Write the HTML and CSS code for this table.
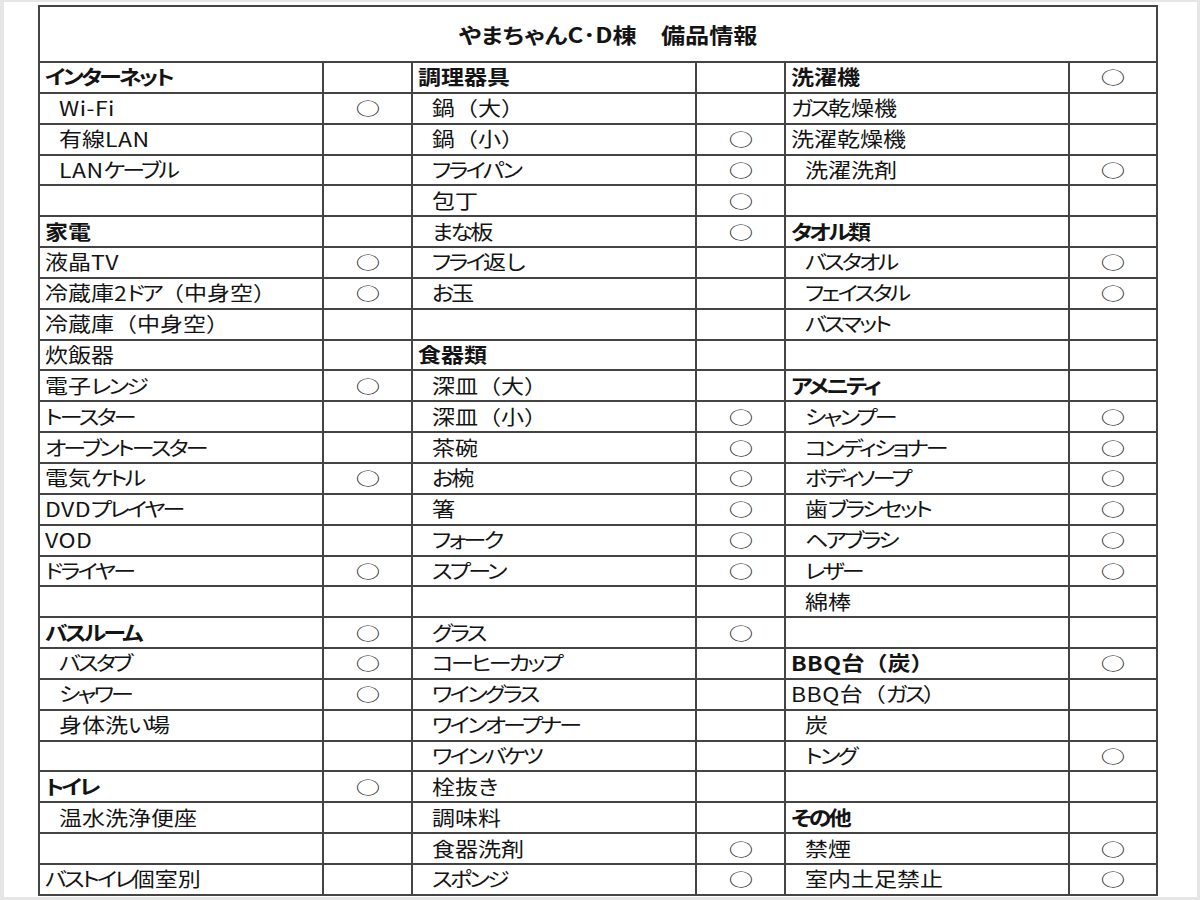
FILE: index.html
```html
<!DOCTYPE html>
<html lang="ja">
<head>
<meta charset="utf-8">
<title>やまちゃんC･D棟 備品情報</title>
<link rel="stylesheet" href="styles.css">
</head>
<body>
<div class="sheet">
<table class="list">
<colgroup>
<col class="c-name1"><col class="c-mark"><col class="c-name"><col class="c-mark"><col class="c-name"><col class="c-mark-last">
</colgroup>
<thead>
<tr class="title-row"><th colspan="6"><span class="t">やまちゃんC･D棟　備品情報</span></th></tr>
</thead>
<tbody>
<tr><td class="hd"><span class="t"><span class="k">インターネット</span></span></td><td class="mk"></td><td class="hd"><span class="t">調理器具</span></td><td class="mk"></td><td class="hd"><span class="t">洗濯機</span></td><td class="mk"><span class="o">○</span></td></tr>
<tr><td class="in"><span class="t"><span class="l">Wi-Fi</span></span></td><td class="mk"><span class="o">○</span></td><td class="in"><span class="t">鍋<span class="p">（</span>大<span class="p">）</span></span></td><td class="mk"></td><td><span class="t"><span class="k">ガス</span>乾燥機</span></td><td class="mk"></td></tr>
<tr><td class="in"><span class="t">有線<span class="l">LAN</span></span></td><td class="mk"></td><td class="in"><span class="t">鍋<span class="p">（</span>小<span class="p">）</span></span></td><td class="mk"><span class="o">○</span></td><td><span class="t">洗濯乾燥機</span></td><td class="mk"></td></tr>
<tr><td class="in"><span class="t"><span class="l">LAN</span><span class="k">ケーブル</span></span></td><td class="mk"></td><td class="in"><span class="t"><span class="k">フライパン</span></span></td><td class="mk"><span class="o">○</span></td><td class="in"><span class="t">洗濯洗剤</span></td><td class="mk"><span class="o">○</span></td></tr>
<tr><td></td><td class="mk"></td><td class="in"><span class="t">包丁</span></td><td class="mk"><span class="o">○</span></td><td></td><td class="mk"></td></tr>
<tr><td class="hd"><span class="t">家電</span></td><td class="mk"></td><td class="in"><span class="t"><span class="k">まな</span>板</span></td><td class="mk"><span class="o">○</span></td><td class="hd"><span class="t"><span class="k">タオル</span>類</span></td><td class="mk"></td></tr>
<tr><td><span class="t">液晶<span class="l">TV</span></span></td><td class="mk"><span class="o">○</span></td><td class="in"><span class="t"><span class="k">フライ</span>返<span class="k">し</span></span></td><td class="mk"></td><td class="in"><span class="t"><span class="k">バスタオル</span></span></td><td class="mk"><span class="o">○</span></td></tr>
<tr><td><span class="t">冷蔵庫2<span class="k">ドア</span><span class="p">（</span>中身空<span class="p">）</span></span></td><td class="mk"><span class="o">○</span></td><td class="in"><span class="t"><span class="k">お</span>玉</span></td><td class="mk"></td><td class="in"><span class="t"><span class="k">フェイスタル</span></span></td><td class="mk"><span class="o">○</span></td></tr>
<tr><td><span class="t">冷蔵庫<span class="p">（</span>中身空<span class="p">）</span></span></td><td class="mk"></td><td></td><td class="mk"></td><td class="in"><span class="t"><span class="k">バスマット</span></span></td><td class="mk"></td></tr>
<tr><td><span class="t">炊飯器</span></td><td class="mk"></td><td class="hd"><span class="t">食器類</span></td><td class="mk"></td><td></td><td class="mk"></td></tr>
<tr><td><span class="t">電子<span class="k">レンジ</span></span></td><td class="mk"><span class="o">○</span></td><td class="in"><span class="t">深皿<span class="p">（</span>大<span class="p">）</span></span></td><td class="mk"></td><td class="hd"><span class="t"><span class="k">アメニティ</span></span></td><td class="mk"></td></tr>
<tr><td><span class="t"><span class="k">トースター</span></span></td><td class="mk"></td><td class="in"><span class="t">深皿<span class="p">（</span>小<span class="p">）</span></span></td><td class="mk"><span class="o">○</span></td><td class="in"><span class="t"><span class="k">シャンプー</span></span></td><td class="mk"><span class="o">○</span></td></tr>
<tr><td><span class="t"><span class="k">オーブントースター</span></span></td><td class="mk"></td><td class="in"><span class="t">茶碗</span></td><td class="mk"><span class="o">○</span></td><td class="in"><span class="t"><span class="k">コンディショナー</span></span></td><td class="mk"><span class="o">○</span></td></tr>
<tr><td><span class="t">電気<span class="k">ケトル</span></span></td><td class="mk"><span class="o">○</span></td><td class="in"><span class="t"><span class="k">お</span>椀</span></td><td class="mk"><span class="o">○</span></td><td class="in"><span class="t"><span class="k">ボディソープ</span></span></td><td class="mk"><span class="o">○</span></td></tr>
<tr><td><span class="t"><span class="l">DVD</span><span class="k">プレイヤー</span></span></td><td class="mk"></td><td class="in"><span class="t">箸</span></td><td class="mk"><span class="o">○</span></td><td class="in"><span class="t">歯<span class="k">ブラシセット</span></span></td><td class="mk"><span class="o">○</span></td></tr>
<tr><td><span class="t"><span class="l">VOD</span></span></td><td class="mk"></td><td class="in"><span class="t"><span class="k">フォーク</span></span></td><td class="mk"><span class="o">○</span></td><td class="in"><span class="t"><span class="k">ヘアブラシ</span></span></td><td class="mk"><span class="o">○</span></td></tr>
<tr><td><span class="t"><span class="k">ドライヤー</span></span></td><td class="mk"><span class="o">○</span></td><td class="in"><span class="t"><span class="k">スプーン</span></span></td><td class="mk"><span class="o">○</span></td><td class="in"><span class="t"><span class="k">レザー</span></span></td><td class="mk"><span class="o">○</span></td></tr>
<tr><td></td><td class="mk"></td><td></td><td class="mk"></td><td class="in"><span class="t">綿棒</span></td><td class="mk"></td></tr>
<tr><td class="hd"><span class="t"><span class="k">バスルーム</span></span></td><td class="mk"><span class="o">○</span></td><td class="in"><span class="t"><span class="k">グラス</span></span></td><td class="mk"><span class="o">○</span></td><td></td><td class="mk"></td></tr>
<tr><td class="in"><span class="t"><span class="k">バスタブ</span></span></td><td class="mk"><span class="o">○</span></td><td class="in"><span class="t"><span class="k">コーヒーカップ</span></span></td><td class="mk"></td><td class="hd"><span class="t"><span class="l">BBQ</span>台<span class="p">（</span>炭<span class="p">）</span></span></td><td class="mk"><span class="o">○</span></td></tr>
<tr><td class="in"><span class="t"><span class="k">シャワー</span></span></td><td class="mk"><span class="o">○</span></td><td class="in"><span class="t"><span class="k">ワイングラス</span></span></td><td class="mk"></td><td><span class="t"><span class="l">BBQ</span>台<span class="p">（</span><span class="k">ガス</span><span class="p">）</span></span></td><td class="mk"></td></tr>
<tr><td class="in"><span class="t">身体洗<span class="k">い</span>場</span></td><td class="mk"></td><td class="in"><span class="t"><span class="k">ワインオープナー</span></span></td><td class="mk"></td><td class="in"><span class="t">炭</span></td><td class="mk"></td></tr>
<tr><td></td><td class="mk"></td><td class="in"><span class="t"><span class="k">ワインバケツ</span></span></td><td class="mk"></td><td class="in"><span class="t"><span class="k">トング</span></span></td><td class="mk"><span class="o">○</span></td></tr>
<tr><td class="hd"><span class="t"><span class="k">トイレ</span></span></td><td class="mk"><span class="o">○</span></td><td class="in"><span class="t">栓抜<span class="k">き</span></span></td><td class="mk"></td><td></td><td class="mk"></td></tr>
<tr><td class="in"><span class="t">温水洗浄便座</span></td><td class="mk"></td><td class="in"><span class="t">調味料</span></td><td class="mk"></td><td class="hd"><span class="t"><span class="k">その</span>他</span></td><td class="mk"></td></tr>
<tr><td></td><td class="mk"></td><td class="in"><span class="t">食器洗剤</span></td><td class="mk"><span class="o">○</span></td><td class="in"><span class="t">禁煙</span></td><td class="mk"><span class="o">○</span></td></tr>
<tr><td><span class="t"><span class="k">バストイレ</span>個室別</span></td><td class="mk"></td><td class="in"><span class="t"><span class="k">スポンジ</span></span></td><td class="mk"><span class="o">○</span></td><td class="in"><span class="t">室内土足禁止</span></td><td class="mk"><span class="o">○</span></td></tr>
</tbody>
</table>
</div>
</body>
</html>
```
FILE: styles.css
```css
html, body {
  margin: 0;
  padding: 0;
}
body {
  background: #e6e6e6;
  padding: 2px 3px 3px 4px;
  font-family: "Noto Sans CJK JP", "Noto Sans", sans-serif;
  color: #141414;
}
.sheet {
  background: #ffffff;
  height: 895px;
  padding: 3px 0 0 34px;
  box-sizing: border-box;
}
.list {
  border-collapse: collapse;
  table-layout: fixed;
  width: 1118px;
  border: 2px solid #3c3c3c;
}
.c-name1 { width: 284px; }
.c-name { width: 284px; }
.c-mark { width: 89px; }
.c-mark-last { width: 88px; }
.list th,
.list td {
  border: 2px solid #444;
  padding: 0 0 0 5px;
  font-size: 20px;
  font-weight: 400;
  line-height: 1;
  white-space: nowrap;
  overflow: hidden;
  text-align: left;
  vertical-align: middle;
}
.title-row th {
  height: 54px;
  text-align: center;
  font-weight: 700;
  font-size: 21px;
  padding: 0 0 0 20px;
}
.title-row th .t {
  transform-origin: center center;
}
.list tbody tr {
  height: 30.85px;
}
.list td.in {
  padding-left: 19px;
}
.list td.hd {
  font-weight: 700;
}
.list td.mk {
  text-align: center;
  padding: 0;
}
.t {
  display: inline-block;
  transform: scaleX(1.15);
  transform-origin: left center;
  font-feature-settings: "palt" 1;
}
.k {
  letter-spacing: -2.4px;
}
.l {
  letter-spacing: 0.4px;
}
.p {
  font-feature-settings: normal;
}
.o {
  display: inline-block;
  font-size: 20px;
  transform: scale(1.22, 0.85);
  transform-origin: center center;
  color: #2a2a2a;
}
```
